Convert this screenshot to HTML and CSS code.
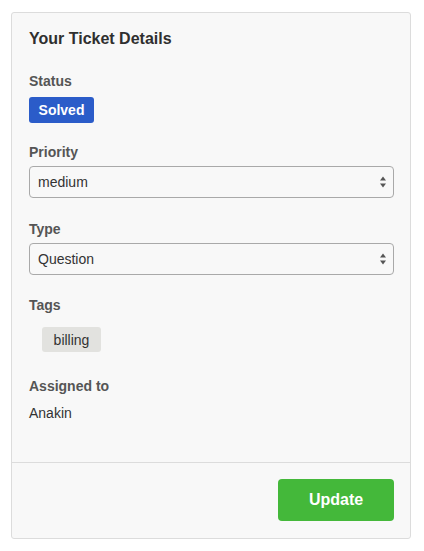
FILE: index.html
```html
<!DOCTYPE html>
<html>
<head>
<meta charset="utf-8">
<link rel="stylesheet" href="styles.css">
</head>
<body>
<div class="card">
  <div class="card-body">
    <h2 class="title">Your Ticket Details</h2>

    <div class="field field-status">
      <div class="label">Status</div>
      <span class="badge">Solved</span>
    </div>

    <div class="field field-priority">
      <div class="label">Priority</div>
      <div class="select">
        <span class="select-value">medium</span>
        <svg class="arrows" width="6" height="12" viewBox="0 0 6 12"><path d="M3 0.5 L6 4.5 L0 4.5 Z" fill="#555"/><path d="M0 7.5 L6 7.5 L3 11.5 Z" fill="#555"/></svg>
      </div>
    </div>

    <div class="field field-type">
      <div class="label">Type</div>
      <div class="select">
        <span class="select-value">Question</span>
        <svg class="arrows" width="6" height="12" viewBox="0 0 6 12"><path d="M3 0.5 L6 4.5 L0 4.5 Z" fill="#555"/><path d="M0 7.5 L6 7.5 L3 11.5 Z" fill="#555"/></svg>
      </div>
    </div>

    <div class="field field-tags">
      <div class="label">Tags</div>
      <div class="tags"><span class="tag">billing</span></div>
    </div>

    <div class="field field-assigned">
      <div class="label">Assigned to</div>
      <div class="value">Anakin</div>
    </div>
  </div>
  <div class="card-footer">
    <button class="btn-update">Update</button>
  </div>
</div>
</body>
</html>
```

FILE: styles.css
```css
html, body {
  margin: 0;
  padding: 0;
  background: #ffffff;
}
body {
  padding: 12px 12px 0 11px;
  font-family: "Liberation Sans", Arial, sans-serif;
  color: #333;
  font-size: 14px;
}
.card {
  box-sizing: border-box;
  width: 400px;
  height: 527px;
  border: 1px solid #dcdcdc;
  border-radius: 3px;
  background: #f8f8f8;
  display: flex;
  flex-direction: column;
}
.card-body {
  flex: 1;
  padding: 16px 16px 0 17px;
  display: flex;
  flex-direction: column;
}
.title {
  margin: 0;
  font-size: 16px;
  line-height: 20px;
  font-weight: bold;
  color: #2f2f2f;
}
.label {
  font-size: 14px;
  line-height: 20px;
  font-weight: bold;
  color: #555;
}
.field-status { margin-top: 22px; }
.field-status .label { margin-bottom: 6px; }
.badge {
  display: inline-flex;
  align-items: center;
  justify-content: center;
  width: 65px;
  height: 26px;
  border-radius: 3px;
  background: #2b5cc9;
  color: #fff;
  font-weight: bold;
  font-size: 14px;
}
.field-priority { margin-top: 19px; }
.field-type { margin-top: 21px; }
.field-priority .label, .field-type .label { margin-bottom: 4px; }
.select {
  box-sizing: border-box;
  height: 32px;
  border: 1px solid #a9a9a9;
  border-radius: 4px;
  background: #f8f8f8;
  display: flex;
  align-items: center;
  justify-content: space-between;
  padding: 0 7px 0 8px;
}
.select-value {
  font-size: 14px;
  color: #333;
}
.arrows { display: block; }
.field-tags { margin-top: 20px; }
.field-tags .label { margin-bottom: 12px; }
.tags { padding-left: 13px; display: flex; }
.tag {
  display: inline-flex;
  align-items: center;
  justify-content: center;
  width: 59px;
  height: 25px;
  border-radius: 3px;
  background: #e2e2df;
  color: #333;
  font-size: 14px;
}
.field-assigned { margin-top: 24px; }
.field-assigned .label { margin-bottom: 7px; }
.value {
  font-size: 14px;
  line-height: 20px;
  color: #333;
}
.card-footer {
  border-top: 1px solid #dcdcdc;
  padding: 16px 16px 17px 0;
  display: flex;
  justify-content: flex-end;
}
.btn-update {
  width: 116px;
  height: 42px;
  border: none;
  border-radius: 4px;
  background: #44b83a;
  color: #fff;
  font-family: "Liberation Sans", Arial, sans-serif;
  font-size: 16px;
  font-weight: bold;
  padding: 0;
}
```
